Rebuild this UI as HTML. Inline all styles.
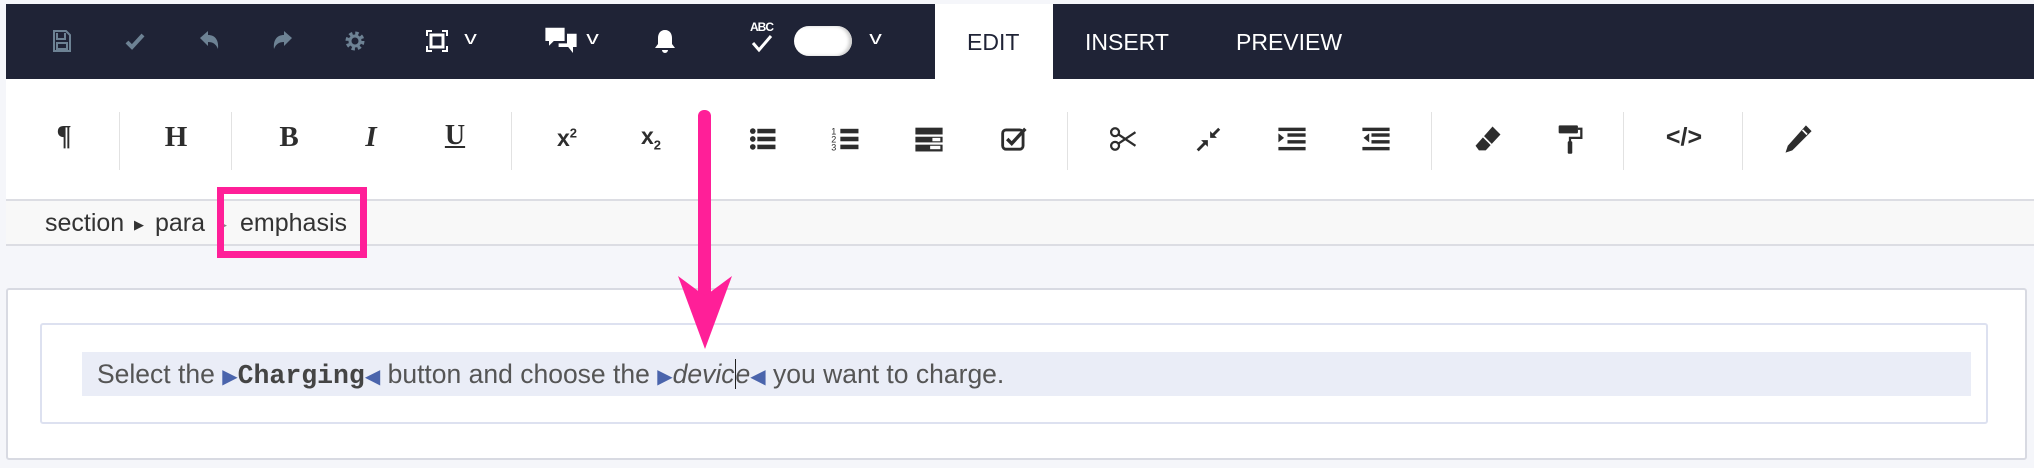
<!DOCTYPE html>
<html><head><meta charset="utf-8"><style>
*{margin:0;padding:0;box-sizing:border-box}
body{width:2034px;height:468px;background:#f5f6fa;position:relative;overflow:hidden;font-family:"Liberation Sans",sans-serif}
.a{position:absolute}
#top{left:6px;top:4px;width:2028px;height:75px;background:#1f2336}
#tab{left:935px;top:4px;width:118px;height:77px;background:#fff}
.tt{font-size:23px;top:29px;color:#fff}
#tb{left:6px;top:79px;width:2028px;height:122px;background:#fff;border-bottom:2px solid #dcdde3}
#bc{left:6px;top:201px;width:2028px;height:45px;background:#f8f8f8;border-bottom:2px solid #dcdde3}
.sep{top:112px;width:1px;height:58px;background:#e2e2e2}
.ic{top:122px;width:34px;height:34px;margin-left:-17px;fill:#2d2d2d;color:#2d2d2d;text-align:center}
.ti{top:26px;width:30px;height:30px;margin-left:-15px}
.chev{font-size:18px;color:#fff;top:28px;transform:scaleX(1.4)}
.bw{top:209px;font-size:25px;color:#333}
.m{color:#4a64ac;font-size:20px}
</style></head><body>
<div class="a" id="top"></div>
<div class="a" id="tab"></div>
<div class="a tt" style="left:967px;color:#1f2336">EDIT</div>
<div class="a tt" style="left:1085px">INSERT</div>
<div class="a tt" style="left:1236px">PREVIEW</div>

<svg class="a ti" style="left:61px" viewBox="0 0 30 30"><path d="M8 5h12l4 4v16H8z M11 7v6h8V7 M11 17h10v6H11z" fill="none" stroke="#6d8294" stroke-width="2"/></svg>
<svg class="a ti" style="left:135px" viewBox="0 0 30 30"><path d="M7 16l5 5 11-12" fill="none" stroke="#6d8294" stroke-width="4"/></svg>
<svg class="a ti" style="left:209px" viewBox="0 0 30 30"><path d="M6 12l8-7v4c7 0 11 5 10 14-2-5-5-7-10-7v4z" fill="#6d8294"/></svg>
<svg class="a ti" style="left:283px" viewBox="0 0 30 30"><path d="M24 12l-8-7v4C9 9 5 14 6 23c2-5 5-7 10-7v4z" fill="#6d8294"/></svg>
<svg class="a ti" style="left:355px" viewBox="0 0 30 30"><circle cx="15" cy="15" r="7" fill="none" stroke="#6d8294" stroke-width="5" stroke-dasharray="3 2.5"/><circle cx="15" cy="15" r="5" fill="none" stroke="#6d8294" stroke-width="3"/></svg>
<svg class="a ti" style="left:437px" viewBox="0 0 30 30"><path d="M5 10V5h5M20 5h5v5M25 20v5h-5M10 25H5v-5" fill="none" stroke="#fff" stroke-width="2"/><rect x="9" y="9" width="12" height="12" fill="none" stroke="#fff" stroke-width="3"/></svg>
<div class="a chev" style="left:466px">v</div>
<svg class="a ti" style="left:558px;width:36px;height:36px;top:23px" viewBox="0 0 30 30"><path d="M2 4h16v11H9l-4 4v-4H2z" fill="#fff"/><path d="M20 9h8v11h-3v5l-4-5h-8v-3h7z" fill="#fff"/></svg>
<div class="a chev" style="left:588px">v</div>
<svg class="a ti" style="left:665px" viewBox="0 0 30 30"><path d="M15 4c5 0 7 4 7 8v6l3 4H5l3-4v-6c0-4 2-8 7-8zM12 24h6a3 3 0 0 1-6 0z" fill="#fff"/></svg>
<div class="a" style="left:750px;top:20px;color:#fff;font-size:12px;font-weight:bold;letter-spacing:-1px">ABC</div>
<svg class="a" style="left:750px;top:34px" width="26" height="20" viewBox="0 0 26 20"><path d="M3 9l6 7 12-14" fill="none" stroke="#fff" stroke-width="3"/></svg>
<div class="a" style="left:794px;top:26px;width:58px;height:30px;border-radius:15px;background:#fff;box-shadow:inset -3px 0 3px #ccc"></div>
<div class="a chev" style="left:871px">v</div>

<div class="a" id="tb"></div>
<div class="a sep" style="left:119px"></div><div class="a sep" style="left:231px"></div><div class="a sep" style="left:511px"></div><div class="a sep" style="left:1067px"></div><div class="a sep" style="left:1431px"></div><div class="a sep" style="left:1623px"></div><div class="a sep" style="left:1742px"></div>

<div class="a ic" style="left:64px;font:bold 28px 'Liberation Serif',serif;top:121px">¶</div>
<div class="a ic" style="left:176px;font:bold 29px 'Liberation Serif',serif;top:121px">H</div>
<div class="a ic" style="left:289px;font:bold 29px 'Liberation Serif',serif;top:121px">B</div>
<div class="a ic" style="left:371px;font:italic bold 29px 'Liberation Serif',serif;top:121px">I</div>
<div class="a ic" style="left:455px;font:bold 28px 'Liberation Serif',serif;top:120px;text-decoration:underline">U</div>
<div class="a ic" style="left:567px;font:bold 23px 'Liberation Sans';top:125px">x<sup style="font-size:13px">2</sup></div>
<div class="a ic" style="left:651px;font:bold 23px 'Liberation Sans';top:123px">x<sub style="font-size:13px">2</sub></div>
<svg class="a ic" style="left:763px" viewBox="0 0 30 30"><circle cx="6" cy="8" r="2.5"/><circle cx="6" cy="15" r="2.5"/><circle cx="6" cy="22" r="2.5"/><rect x="10" y="6" width="16" height="4"/><rect x="10" y="13" width="16" height="4"/><rect x="10" y="20" width="16" height="4"/></svg>
<svg class="a ic" style="left:846px" viewBox="0 0 30 30"><text x="2" y="11" font-size="8" font-family="Liberation Sans">1</text><text x="2" y="18" font-size="8" font-family="Liberation Sans">2</text><text x="2" y="25" font-size="8" font-family="Liberation Sans">3</text><rect x="10" y="6" width="16" height="4"/><rect x="10" y="13" width="16" height="4"/><rect x="10" y="20" width="16" height="4"/></svg>
<svg class="a ic" style="left:929px" viewBox="0 0 30 30"><rect x="3" y="5" width="24" height="6"/><rect x="3" y="13" width="24" height="5"/><rect x="3" y="20" width="24" height="6"/><rect x="18" y="14" width="7" height="3" fill="#fff"/><rect x="16" y="21" width="9" height="3" fill="#fff"/></svg>
<svg class="a ic" style="left:1014px" viewBox="0 0 30 30"><rect x="5" y="7" width="18" height="17" rx="3" fill="none" stroke="#2d2d2d" stroke-width="2.5"/><path d="M9 15l4 4 12-13" fill="none" stroke="#2d2d2d" stroke-width="3"/></svg>
<svg class="a ic" style="left:1123px" viewBox="0 0 30 30"><circle cx="8" cy="9" r="3.5" fill="none" stroke="#2d2d2d" stroke-width="2"/><circle cx="8" cy="21" r="3.5" fill="none" stroke="#2d2d2d" stroke-width="2"/><path d="M11 11l15 10M11 19l15-10" stroke="#2d2d2d" stroke-width="2"/></svg>
<svg class="a ic" style="left:1209px" viewBox="0 0 30 30"><path d="M5 25l7-7M24 6l-7 7" stroke="#2d2d2d" stroke-width="2.5"/><path d="M8 16h6v6zM22 14h-6V8z"/></svg>
<svg class="a ic" style="left:1292px" viewBox="0 0 30 30"><rect x="3" y="5" width="24" height="3"/><rect x="11" y="10" width="16" height="3"/><rect x="11" y="16" width="16" height="3"/><rect x="3" y="22" width="24" height="3"/><path d="M3 10l5 4-5 4z"/></svg>
<svg class="a ic" style="left:1376px" viewBox="0 0 30 30"><rect x="3" y="5" width="24" height="3"/><rect x="11" y="10" width="16" height="3"/><rect x="11" y="16" width="16" height="3"/><rect x="3" y="22" width="24" height="3"/><path d="M9 10l-5 4 5 4z"/></svg>
<svg class="a ic" style="left:1488px" viewBox="0 0 30 30"><path d="M19 4l7 7-13 14H7l-3-4z"/><path d="M10 12l8 8" stroke="#fff" stroke-width="1.5"/></svg>
<svg class="a ic" style="left:1570px" viewBox="0 0 30 30"><rect x="5" y="3" width="17" height="7" rx="1"/><path d="M22 6h3v8H15v4" fill="none" stroke="#2d2d2d" stroke-width="2"/><rect x="13" y="17" width="4" height="11" rx="1"/></svg>
<div class="a ic" style="left:1684px;font:bold 25px 'Liberation Sans';top:123px;width:50px;margin-left:-25px">&lt;/&gt;</div>
<svg class="a ic" style="left:1798px" viewBox="0 0 30 30"><path d="M22 3l5 5L10 25l-6 2 2-6z"/><path d="M19 7l4 4" stroke="#fff" stroke-width="1.5"/></svg>

<div class="a" id="bc"></div>
<div class="a bw" style="left:45px">section</div>
<div class="a bw" style="left:134px;font-size:13px;top:217px">&#9654;</div>
<div class="a bw" style="left:155px">para</div>
<div class="a bw" style="left:217px;font-size:13px;top:217px;color:#888">&#9654;</div>
<div class="a bw" style="left:240px">emphasis</div>
<div class="a" style="left:217px;top:187px;width:150px;height:71px;border:7px solid #ff1f98"></div>

<div class="a" style="left:6px;top:288px;width:2021px;height:172px;background:#fff;border:2px solid #d8dae2;border-radius:3px"></div>
<div class="a" style="left:40px;top:323px;width:1948px;height:101px;background:#fff;border:2px solid #dde1f0;border-radius:3px"></div>
<div class="a" style="left:82px;top:352px;width:1889px;height:44px;background:#eaedf7"></div>
<div class="a" style="left:97px;top:359px;font-size:26.5px;color:#555;white-space:nowrap">Select the <span class="m">&#9654;</span><b style="font-family:'Liberation Mono',monospace;color:#444">Charging</b><span class="m">&#9664;</span> button and choose the <span class="m">&#9654;</span><i>devic</i><span style="border-left:1px solid #222"></span><i>e</i><span class="m">&#9664;</span> you want to charge.</div>

<div class="a" style="left:698px;top:110px;width:13px;height:190px;background:#ff1f98;border-radius:6px"></div>
<svg class="a" style="left:676px;top:276px" width="58" height="74" viewBox="0 0 58 74"><path d="M2 0L29 20 56 0 29 73z" fill="#ff1f98"/></svg>
</body></html>
